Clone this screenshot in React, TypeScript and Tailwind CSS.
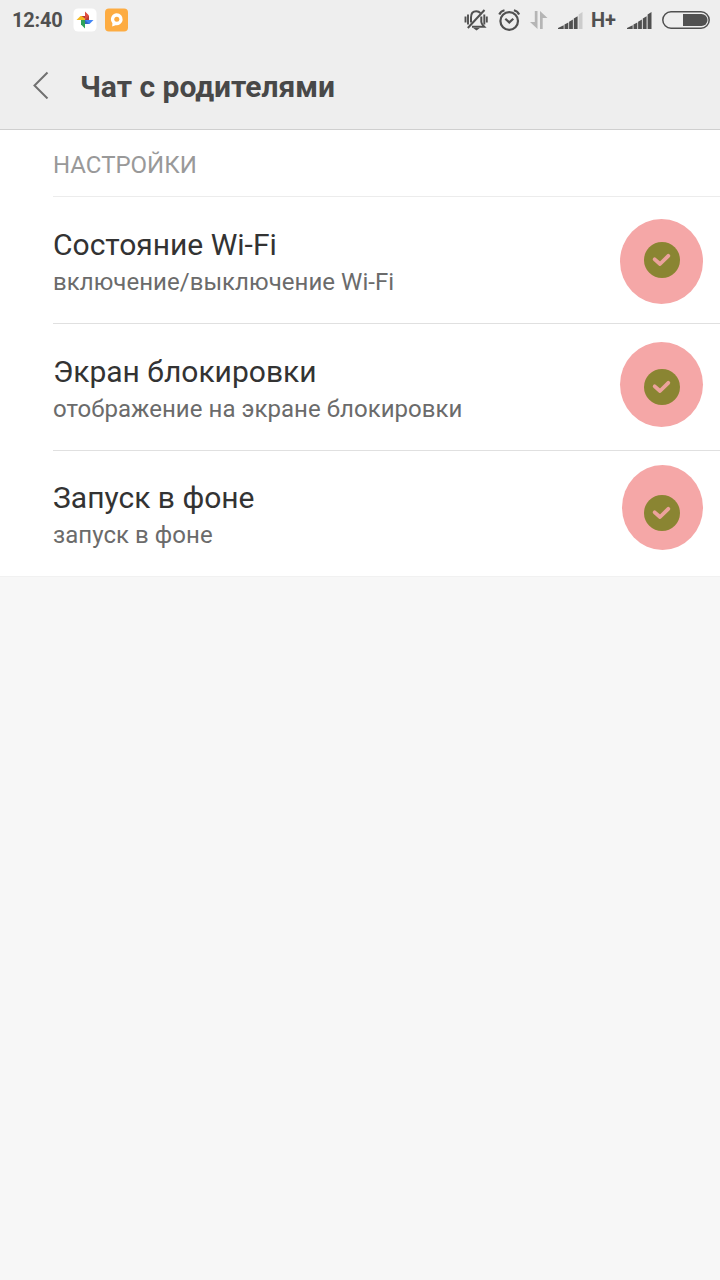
import React from 'react';

interface Permission {
  title: string;
  description: string;
  highlight: string;
}

const permissions: Permission[] = [
  {
    title: 'Состояние Wi-Fi',
    description: 'включение/выключение Wi-Fi',
    highlight: '-left-6 -top-[23px] w-[83px]',
  },
  {
    title: 'Экран блокировки',
    description: 'отображение на экране блокировки',
    highlight: '-left-6 -top-[27px] w-[83px]',
  },
  {
    title: 'Запуск в фоне',
    description: 'запуск в фоне',
    highlight: '-left-[22px] -top-[30px] w-[81px]',
  },
];

export default function App() {
  return (
    <div className="flex min-h-screen w-full flex-col bg-[#f7f7f7] font-[Roboto,sans-serif]">
      <header className="h-[130px] border-b border-[#cfcfcf] bg-[#eeeeee]">
        <StatusBar />
        <div className="flex h-[90px] items-center pl-8">
          <svg className="h-7 w-[17px]" viewBox="0 0 17 28" fill="none" stroke="#707070" strokeWidth="2">
            <path d="M15.500 1.500 2.500 14.500l13 13" />
          </svg>
          <h1 className="ml-[31px] whitespace-nowrap pt-[3px] text-[30px] leading-9 font-bold text-[#484848]">Чат с родителями</h1>
        </div>
      </header>

      <main className="bg-white pl-[53px]">
        <h2 className="flex h-[67px] items-center border-b border-[#ececec] pt-1 text-2xl text-[#999999]">НАСТРОЙКИ</h2>
        {permissions.map((item) => (
          <PermissionRow key={item.title} item={item} />
        ))}
      </main>
      <div className="h-px bg-[#f1f1f1]" />
    </div>
  );
}

function PermissionRow({ item }: { item: Permission }) {
  return (
    <div className="flex h-[127px] items-center justify-between border-b border-[#e0e0e0] pr-10 last:h-[125px] last:border-b-0 last:pb-px">
      <div className="whitespace-nowrap pt-1.5">
        <div className="text-[30px] leading-[38px] text-[#333333]">{item.title}</div>
        <div className="text-2xl leading-9 tracking-[0.04px] text-[#6b6b6b]">{item.description}</div>
      </div>
      <div className="relative h-9 w-9">
        <div className={`absolute h-[85px] rounded-[50%] bg-[#f5a7a7] ${item.highlight}`} />
        <svg className="relative h-9 w-9" viewBox="0 0 36 36" fill="none">
          <circle cx="18" cy="18" r="18" fill="#8a8532" />
          <path d="m10.700 17.300 5.300 4.700 8.300-8.200" stroke="#eca29c" strokeWidth="3.800" strokeLinecap="round" strokeLinejoin="round" />
        </svg>
      </div>
    </div>
  );
}

function StatusBar() {
  return (
    <div className="flex h-10 items-center justify-between pl-3 pr-2.5 text-[#505050]">
      <div className="flex items-center">
        <span className="w-[61px] text-xl font-bold tracking-[-0.2px]">12:40</span>
        <PhotosIcon />
        <ChatIcon />
      </div>
      <div className="flex items-center">
        <MutedBellIcon />
        <AlarmIcon />
        <DataIcon />
        <SignalIcon dimLast />
        <span className="ml-2 w-[28px] text-xl font-bold">H+</span>
        <SignalIcon />
        <BatteryIcon />
      </div>
    </div>
  );
}

function PhotosIcon() {
  return (
    <svg className="h-6 w-6" viewBox="0 0 24 24">
      <rect x="0.5" y="0.5" width="23" height="23" rx="4.500" fill="#fff" />
      <path d="M12 12V3.500L16 7.500V12Z" fill="#dd4b3e" />
      <path d="M12 12h8.500L16.500 16H12Z" fill="#4285f4" />
      <path d="M12 12v8.500L8 16.500V12Z" fill="#2fa35a" />
      <path d="M12 12H3.500L7.500 8H12Z" fill="#f5b921" />
      <path d="m12 12 4-4v4ZM12 12v-1.500L8.500 8H12Z" fill="#b93a35" />
      <path d="m12 12 4 4h-4Z" fill="#3367c0" />
    </svg>
  );
}

function ChatIcon() {
  return (
    <svg className="ml-2 h-6 w-6" viewBox="0 0 24 24">
      <rect x="0" y="0.5" width="23" height="23" rx="4" fill="#fdac42" />
      <path d="M11.800 5.300a6 6 0 1 1-1.200 11.900L7.200 18.500l.2-3.300A6 6 0 0 1 11.800 5.300Z" fill="#fff" />
      <circle cx="11.800" cy="11.200" r="2.500" fill="#fdac42" />
    </svg>
  );
}

function MutedBellIcon() {
  return (
    <svg className="h-6 w-6" viewBox="0 0 24 24" fill="none" stroke="currentColor" strokeWidth="2">
      <path d="M1.500 8.500v6M4 6.500v10M20.300 6.500v10M22.800 8.500v6" strokeWidth="1.900" />
      <path d="M7 14.500V9.500c0-4 2.300-6.200 5.300-6.200 1.800 0 3.200.7 4.100 1.900M17.300 8.500v5.500c0 1.800 1.200 3 2.900 4.700H8" />
      <path d="M3.800 20 20.500 2" />
      <path d="M9.200 20h6.600l-3.300 2.500Z" fill="currentColor" stroke="none" />
    </svg>
  );
}

function AlarmIcon() {
  return (
    <svg className="ml-2.5 h-6 w-6" viewBox="0 0 24 24" fill="none" stroke="currentColor" strokeWidth="2.200">
      <circle cx="11.200" cy="13" r="8.800" />
      <path d="m7.300 10.800 4 3.600 4-3.600" />
      <path d="M1.300 6.500c.8-2 2.700-3.600 5.200-4.200M21.100 6.500c-.8-2-2.700-3.600-5.200-4.200" />
    </svg>
  );
}

function DataIcon() {
  return (
    <svg className="ml-2 h-6 w-5" viewBox="0 0 20 24" fill="#b5b5b5">
      <path d="M4.800 3h2.700v18L0 14h4.800Z" />
      <path d="M10 21h2.700V10h4.800L10 3Z" />
    </svg>
  );
}

function SignalIcon({ dimLast = false }: { dimLast?: boolean }) {
  return (
    <svg className="ml-2 h-6 w-[25px]" viewBox="0 0 25 24" fill="currentColor">
      <path d="M0 21v-1l5.700-2.800V21Z" />
      <path d="M6.500 21v-4.600l3.800-2V21Z" />
      <path d="M11.100 21v-7.300l3.800-2.200V21Z" />
      <path d="M15.800 21V10.500l3.800-2.200V21Z" />
      <path d="M20.600 21V6.500L24.500 4V21Z" className={dimLast ? 'text-[#cccccc]' : ''} fill="currentColor" />
    </svg>
  );
}

function BatteryIcon() {
  return (
    <svg className="ml-2.5 h-[18px] w-12" viewBox="0 0 48 18" fill="none">
      <rect x="0.800" y="0.800" width="46.400" height="16.400" rx="8.200" stroke="currentColor" strokeWidth="1.500" />
      <path d="M21 3h18.500a6 6 0 0 1 0 12H21Z" fill="currentColor" />
    </svg>
  );
}
